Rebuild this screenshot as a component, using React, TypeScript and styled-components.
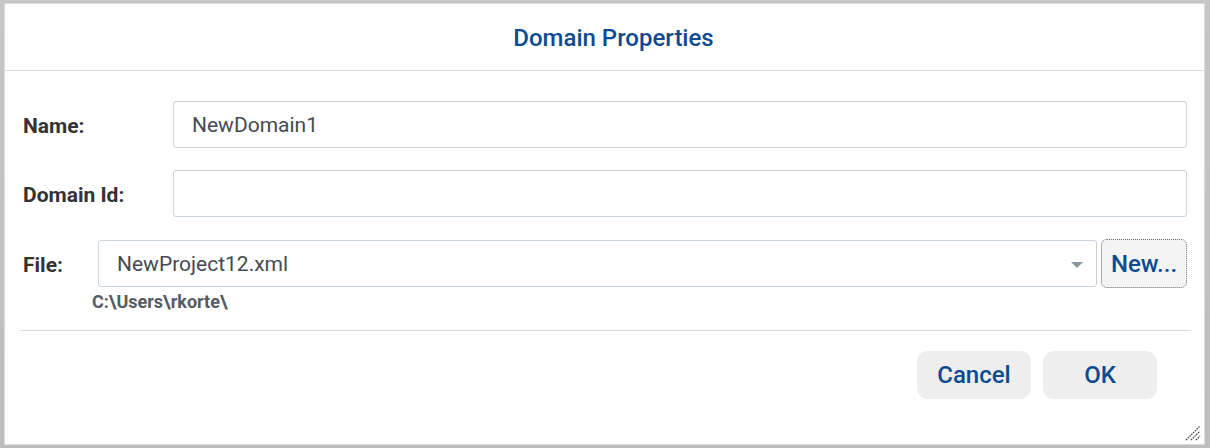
import React from "react";
import styled, { createGlobalStyle } from "styled-components";

const Global = createGlobalStyle`
  html, body { margin: 0; padding: 0; }
  body {
    width: 1210px;
    height: 448px;
    background: linear-gradient(#c6c6c6, #bdbdbd);
    font-family: Roboto, "Liberation Sans", Arial, sans-serif;
    overflow: hidden;
  }
`;

const Page = styled.div`
  padding: 3px 4px 0 4px;
  height: 448px;
  box-sizing: border-box;
`;

const Dialog = styled.div`
  position: relative;
  width: 1201px;
  height: 442px;
  box-sizing: border-box;
  background: #ffffff;
  border: 1px solid #d6dde5;
  display: flex;
  flex-direction: column;
`;

const Header = styled.div`
  height: 67px;
  flex: none;
  border-bottom: 1px solid #dadada;
  display: flex;
  align-items: center;
  justify-content: center;
  box-sizing: border-box;
  padding: 1px 0 0 18px;
`;

const Title = styled.h1`
  margin: 0;
  font-size: 24px;
  font-weight: 500;
  color: #0d4b90;
`;

const Body = styled.div`
  padding: 30px 17px 0 18px;
  display: flex;
  flex-direction: column;
`;

const Row = styled.div<{ $gap?: number }>`
  display: flex;
  align-items: center;
  margin-bottom: ${(p) => p.$gap ?? 22}px;
`;

const Label = styled.label<{ $w: number }>`
  width: ${(p) => p.$w}px;
  flex: none;
  font-size: 21px;
  font-weight: 700;
  color: #333333;
  padding-top: 2px;
`;

const Input = styled.div`
  flex: 1;
  height: 47px;
  box-sizing: border-box;
  border: 1px solid #c9d3de;
  border-radius: 3px;
  display: flex;
  align-items: center;
  padding-left: 18px;
  font-size: 21px;
  color: #444a52;
`;

const Combo = styled(Input)`
  justify-content: space-between;
  padding-right: 13px;
`;

const Arrow = styled.span`
  width: 0;
  height: 0;
  border-left: 6px solid transparent;
  border-right: 6px solid transparent;
  border-top: 6px solid #8c96a3;
  margin-top: 2px;
`;

const NewButton = styled.button`
  margin-left: 4px;
  width: 86px;
  height: 49px;
  box-sizing: border-box;
  border: 1px dotted #6a6a6a;
  border-radius: 6px;
  background: #f4f4f4;
  color: #0d4b90;
  font-family: inherit;
  font-size: 24px;
  font-weight: 500;
  padding: 0;
`;

const Path = styled.div`
  margin: 3px 0 0 69px;
  font-size: 18px;
  font-weight: 700;
  color: #555b63;
  line-height: 22px;
`;

const Divider = styled.hr`
  margin: 17px 0 0 -3px;
  border: none;
  border-top: 1px solid #dadada;
  width: 1171px;
`;

const Footer = styled.div`
  display: flex;
  justify-content: flex-end;
  gap: 12px;
  padding: 20px 47px 0 0;
`;

const Button = styled.button`
  width: 114px;
  height: 48px;
  border: none;
  border-radius: 11px;
  background: #eeeeee;
  color: #0d4b90;
  font-family: inherit;
  font-size: 24px;
  font-weight: 500;
`;

const Grip = styled.svg`
  position: absolute;
  right: 3px;
  bottom: 3px;
`;

export default function App() {
  return (
    <>
      <Global />
      <Page>
        <Dialog>
          <Header>
            <Title>Domain Properties</Title>
          </Header>
          <Body>
            <Row>
              <Label $w={150}>Name:</Label>
              <Input>NewDomain1</Input>
            </Row>
            <Row>
              <Label $w={150}>Domain Id:</Label>
              <Input />
            </Row>
            <Row $gap={0}>
              <Label $w={75}>File:</Label>
              <Combo>
                NewProject12.xml
                <Arrow />
              </Combo>
              <NewButton>New...</NewButton>
            </Row>
            <Path>C:\Users\rkorte\</Path>
            <Divider />
          </Body>
          <Footer>
            <Button>Cancel</Button>
            <Button>OK</Button>
          </Footer>
          <Grip width="16" height="16" viewBox="0 0 16 16">
            <g stroke="#444" strokeWidth="1.3" strokeDasharray="1.5 1">
              <line x1="1" y1="15" x2="15" y2="1" />
              <line x1="6" y1="15" x2="15" y2="6" />
              <line x1="11" y1="15" x2="15" y2="11" />
            </g>
          </Grip>
        </Dialog>
      </Page>
    </>
  );
}
